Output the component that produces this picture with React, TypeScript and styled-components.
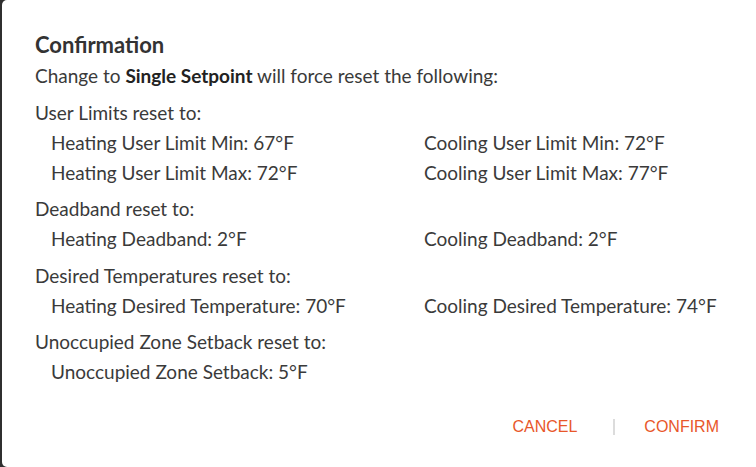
import React from 'react';
import styled, { createGlobalStyle } from 'styled-components';

const GlobalStyle = createGlobalStyle`
  html, body {
    margin: 0;
    padding: 0;
    background: #2f2f2f;
    overflow: hidden;
  }
`;

const Backdrop = styled.div`
  width: 756px;
  height: 467px;
  overflow: hidden;
  padding-left: 2px;
  box-sizing: border-box;
`;

const Dialog = styled.div`
  width: 770px;
  height: 467px;
  box-sizing: border-box;
  background: #fff;
  border-radius: 5px;
  padding: 30px 0 0 33px;
  font-family: Lato, 'Open Sans', sans-serif;
  color: #3a3a3a;
  display: flex;
  flex-direction: column;
`;

const Title = styled.h2`
  margin: 0;
  font-size: 22px;
  font-weight: 700;
  line-height: 30px;
  color: #333;
`;

const Intro = styled.p`
  margin: 1px 0 0;
  font-size: 19px;
  line-height: 30px;

  strong {
    font-weight: 700;
    color: #222;
  }
`;

const Group = styled.section`
  margin-top: 7px;
`;

const GroupLabel = styled.div`
  font-size: 19px;
  line-height: 30px;
`;

const Items = styled.div`
  display: grid;
  grid-template-columns: 373px auto;
  grid-auto-rows: 29.5px;
  align-items: center;
  padding-left: 16px;
  font-size: 19px;
  line-height: 29px;
`;

const Footer = styled.div`
  display: flex;
  align-items: center;
  justify-content: flex-end;
  margin-top: 27px;
  padding-right: 53px;
`;

const ActionButton = styled.button`
  border: 0;
  background: transparent;
  padding: 4px 0;
  font-family: 'Liberation Sans', Arial, sans-serif;
  font-size: 16px;
  color: #e8572a;
  cursor: pointer;
  text-transform: uppercase;
`;

const Divider = styled.span`
  width: 2px;
  height: 16px;
  margin: 0 29px 0 36px;
  background: #dcdcdc;
`;

type Group = { label: string; items: string[] };

const groups: Group[] = [
  {
    label: 'User Limits reset to:',
    items: [
      'Heating User Limit Min: 67°F',
      'Cooling User Limit Min: 72°F',
      'Heating User Limit Max: 72°F',
      'Cooling User Limit Max: 77°F',
    ],
  },
  {
    label: 'Deadband reset to:',
    items: ['Heating Deadband: 2°F', 'Cooling Deadband: 2°F'],
  },
  {
    label: 'Desired Temperatures reset to:',
    items: ['Heating Desired Temperature: 70°F', 'Cooling Desired Temperature: 74°F'],
  },
  {
    label: 'Unoccupied Zone Setback reset to:',
    items: ['Unoccupied Zone Setback: 5°F'],
  },
];

const App: React.FC = () => (
  <>
    <GlobalStyle />
    <Backdrop>
      <Dialog role="dialog">
        <Title>Confirmation</Title>
        <Intro>
          Change to <strong>Single Setpoint</strong> will force reset the following:
        </Intro>
        {groups.map((g) => (
          <Group key={g.label}>
            <GroupLabel>{g.label}</GroupLabel>
            <Items>
              {g.items.map((item) => (
                <span key={item}>{item}</span>
              ))}
            </Items>
          </Group>
        ))}
        <Footer>
          <ActionButton>Cancel</ActionButton>
          <Divider />
          <ActionButton>Confirm</ActionButton>
        </Footer>
      </Dialog>
    </Backdrop>
  </>
);

export default App;
